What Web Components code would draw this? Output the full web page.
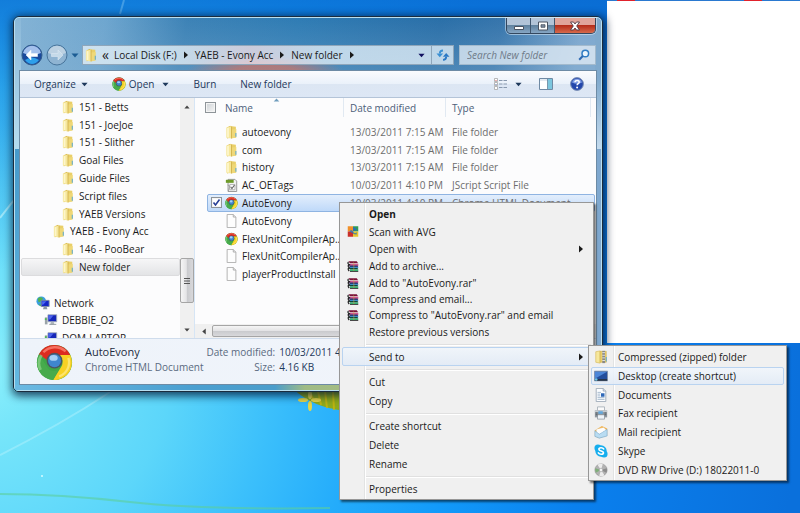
<!DOCTYPE html>
<html lang="en">
<head>
<meta charset="utf-8">
<title>New folder</title>
<style>
  html, body { margin: 0; height: 100%; }
  body { font: 10px/14px "Open Sans", "Noto Sans", sans-serif; color: #1a1a1a; }
</style>
</head>
<body>
<desk-top>
  <blank-panel></blank-panel>
  <explorer-window>
    <address-bar slot="address"></address-bar>
    <tool-bar slot="tools"></tool-bar>
    <nav-tree slot="nav"></nav-tree>
    <file-list slot="files"></file-list>
    <details-pane slot="details"></details-pane>
  </explorer-window>
  <context-menu class="main">
    <menu-item class="big" bold>Open</menu-item>
    <menu-item icon="avg">Scan with AVG</menu-item>
    <menu-item arrow>Open with</menu-item>
    <menu-item class="big" icon="rar">Add to archive...</menu-item>
    <menu-item class="small" icon="rar">Add to "AutoEvony.rar"</menu-item>
    <menu-item class="small" icon="rar">Compress and email...</menu-item>
    <menu-item class="small" icon="rar">Compress to "AutoEvony.rar" and email</menu-item>
    <menu-item class="big">Restore previous versions</menu-item>
    <menu-line></menu-line>
    <menu-item class="roomy" arrow active>Send to</menu-item>
    <menu-line></menu-line>
    <menu-item class="roomy">Cut</menu-item>
    <menu-item class="roomy">Copy</menu-item>
    <menu-line></menu-line>
    <menu-item class="roomy">Create shortcut</menu-item>
    <menu-item class="roomy">Delete</menu-item>
    <menu-item class="roomy">Rename</menu-item>
    <menu-line></menu-line>
    <menu-item class="roomy">Properties</menu-item>
  </context-menu>
  <context-menu class="sub">
    <menu-item icon="zip">Compressed (zipped) folder</menu-item>
    <menu-item icon="desktop" active>Desktop (create shortcut)</menu-item>
    <menu-item icon="document">Documents</menu-item>
    <menu-item icon="fax">Fax recipient</menu-item>
    <menu-item icon="mail">Mail recipient</menu-item>
    <menu-item icon="skype">Skype</menu-item>
    <menu-item icon="disc">DVD RW Drive (D:) 18022011-0</menu-item>
  </context-menu>
</desk-top>

<script>
const ICONS = {
  folder: ['0 0 14 16', `<path d="M2 2.500 6 .8v13.500l-4 1z" fill="#d9b94a"/><path d="M5.500 1.200 12 2v12.500l-6.500-.3z" fill="#e9cf68"/><path d="M1 2.800 7 1.800v13.700l-6-1z" fill="#f6e79c"/><path d="M2 3.500 4 3.200v11l-2-.3z" fill="#fdf6cb"/><path d="M7 5l5.500-.5v9.700L7 15.500z" fill="#efd878"/><path d="M7 1.800v13.700" stroke="#c9a63d" stroke-width=".8"/><path d="M12 9v4.500" stroke="#5fa9cf" stroke-width="1.200"/>`],
  chrome: ['0 0 40 40', `<circle cx="20" cy="20" r="19" fill="#3fa648"/><path d="M3.200 11A19 19 0 0 1 37 12H20a9 9 0 0 0-8.500 5z" fill="#dc2b1f"/><path d="M37 12A19 19 0 0 1 18.500 39l8.800-14.500A9 9 0 0 0 24.500 12z" fill="#f8d123"/><path d="M3.200 11 12 25a9 9 0 0 0 12 3l-5.500 11A19 19 0 0 1 3.200 11z" fill="#47ab4c"/><path d="M6 12A16 16 0 0 0 5 28" stroke="#9fdc98" stroke-width="3" fill="none" opacity=".6"/><path d="M8 9A17 17 0 0 1 32 8" stroke="#ff8f7c" stroke-width="2.500" fill="none" opacity=".7"/><path d="M35 15A16 16 0 0 1 25 35" stroke="#fff2a0" stroke-width="2.500" fill="none" opacity=".6"/><circle cx="20" cy="18" r="8.500" fill="#4b5563"/><circle cx="20" cy="18" r="7" fill="#3f86cf"/><ellipse cx="19" cy="15" rx="4.500" ry="3.200" fill="#a6d0f5"/>`],
  page: ['0 0 13 16', `<path d="M1.500.5h7l3 3v12h-10z" fill="#fdfdfd" stroke="#a9a9a9"/><path d="M8.500.5v3h3" fill="#e8e8e8" stroke="#a9a9a9"/>`],
  script: ['0 0 15 16', `<path d="M3.500 1.500h8l2 2v12h-10z" fill="#f2f2f2" stroke="#8d8d8d"/><path d="M1 2h9v3.500H1z" fill="#6d9a2a"/><path d="M5.500 7.500h6v6h-6z" fill="#fff" stroke="#aaa"/><path d="M6.500 10l1.500 2 3-4" fill="none" stroke="#666" stroke-width="1.300"/><path d="M3 8q3 0 2 3t-1 4" fill="none" stroke="#999"/>`],
  network: ['0 0 16 16', `<circle cx="6" cy="6" r="5.500" fill="#3a9fe0"/><path d="M2 3q3-3 6 0l-2 3-3 1zM3 9l3 1-1 2z" fill="#52b34a"/><path d="M6 5h9v7H6z" fill="#1427c8" stroke="#7a8aa0"/><path d="M7 6h5l-4 4H7z" fill="#4d68f0"/><path d="M9 12h3l1 3H8z" fill="#8995a5"/>`],
  computer: ['0 0 16 14', `<path d="M1 4h3v8H1z" fill="#9aa3a8"/><path d="M1 5h2v2H1z" fill="#4dbb50"/><path d="M4.500 1h10v8h-10z" fill="#1526b8" stroke="#a6b0ba"/><path d="M5 1.500h6l-4 5H5z" fill="#4c63ea"/><path d="M8 9h3l1 3H7z" fill="#aeb6bd"/><path d="M6 12h8" stroke="#8a9299"/>`],
  avg: ['0 0 16 16', `<path d="M1 1h7v7H1z" fill="#f0902a"/><path d="M8 1h7v7H8z" fill="#2f9c58"/><path d="M1 8h7v7H1z" fill="#c9302a"/><path d="M8 8h7v7H8z" fill="#e8c62c"/><path d="M8 2q4 1 6 5-4-2-6 1z" fill="#2a6fb5"/><path d="M3 8q3-4 5 0t5 1v3q-4 0-6-2z" fill="#2a72b8" opacity=".8"/>`],
  rar: ['0 0 16 16', `<path d="M2 1h11l2 3H4z" fill="#7a1238"/><path d="M4 4h11v2H4z" fill="#f1d7e2"/><path d="M3 5h12v2H3z" fill="#c32a70"/><path d="M2 6.500h12l1 2H4z" fill="#27356f"/><path d="M4 8.500h11v2H4z" fill="#3c8cc8"/><path d="M2 10h12l1 2H4z" fill="#0e4636"/><path d="M4 12h11v2H4z" fill="#35b070"/><path d="M4 14h11v1H4z" fill="#111"/><path d="M2 2q-2 2 1 3.500Q0 7 3 9.500 0 11 3 14" fill="none" stroke="#1a1a1a" stroke-width="1.500"/><path d="M8 1l2 3v10H8z" fill="#d2a93a" opacity=".35"/>`],
  zip: ['0 0 16 16', `<path d="M2 2l5-1v14l-5-1z" fill="#f6e79c" stroke="#d0ad42" stroke-width=".6"/><path d="M7 1.500h7V14H7z" fill="#ebcf68" stroke="#c9a63d" stroke-width=".6"/><path d="M9.500 1h3v14h-3z" fill="#888"/><path d="M9.500 3h3M9.500 6h3M9.500 9h3M9.500 12h3" stroke="#eee"/><path d="M14 8v5" stroke="#5fa9cf" stroke-width="1.200"/>`],
  desktop: ['0 0 16 16', `<path d="M.5 2.500h15v11H.5z" fill="#234e9c" stroke="#8794a8"/><path d="M1 3h14L1 11z" fill="#4b86d8"/><path d="M1 11.500h14v2H1z" fill="#293445"/><circle cx="2.500" cy="12" r="1.500" fill="#6bc5e8"/>`],
  document: ['0 0 16 16', `<path d="M2.500.5h8l3 3v12h-11z" fill="#fbfdff" stroke="#9aa7b5"/><path d="M10.500.5v3h3" fill="#dde5ee" stroke="#9aa7b5"/><path d="M4 5h4M4 7h3M4 9h3M4 11h8M4 13h8" stroke="#9fb2c8"/><path d="M8 6h4v4H8z" fill="#2f68b8"/>`],
  fax: ['0 0 16 16', `<path d="M4 1h8v5H4z" fill="#fafafa" stroke="#a8b0b8"/><path d="M1 5h14v8H1z" fill="#8f979e"/><path d="M1 5h14v2H1z" fill="#c6ccd1"/><path d="M5 6h5v3H5z" fill="#62a7dc"/><path d="M4 10h8v5H4z" fill="#eef3f8" stroke="#78828c" stroke-width=".7"/><path d="M2 8h2M2 10h2M12 8h2M12 10h2" stroke="#4f565c"/>`],
  mail: ['0 0 16 16', `<path d="M1 6 9 1l6 3v8l-9 3-5-2z" fill="#f3b451"/><path d="M3 5l8-2 3 3-3 5-8-1z" fill="#fff" stroke="#dfe5ea" stroke-width=".5"/><path d="M1 6.500l5 4L15 5v7.500L6 15l-5-2z" fill="#b9dcf2" stroke="#79a9cc" stroke-width=".7"/><path d="M3 6.500l3.500 2.800L13 5.400 11 3.500 4 5z" fill="#fdfdfd"/>`],
  skype: ['0 0 16 16', `<circle cx="8" cy="8" r="6.500" fill="#16aeee"/><circle cx="4.500" cy="4.500" r="4" fill="#16aeee"/><circle cx="11.500" cy="11.500" r="4" fill="#16aeee"/><path d="M11 5.600C10 3.800 5.600 3.800 5.600 6c0 2.500 5.200 1.500 5.200 4 0 2.200-4.600 2.200-5.800.2" fill="none" stroke="#fff" stroke-width="1.900" stroke-linecap="round"/>`],
  disc: ['0 0 16 16', `<circle cx="8" cy="8" r="7" fill="#b2b2b2" stroke="#8d8d8d" stroke-width=".7"/><path d="M8 8 4 2a7 7 0 0 1 6-.6zM8 8l4 6a7 7 0 0 1-6 .6z" fill="#ececec"/><path d="M8 8 1.500 6a7 7 0 0 0 .5 5z" fill="#7fae7a"/><path d="M8 8l6.600-2q.8 3-.6 5z" fill="#8b8b8b"/><circle cx="8" cy="8" r="2" fill="#f4f4f4" stroke="#999" stroke-width=".6"/>`],
  search: ['0 0 12 12', `<circle cx="7.300" cy="4.500" r="3.300" fill="#eaf5fd" stroke="#2e7cc4" stroke-width="1.500"/><path d="M4.800 7 1.200 10.800" stroke="#2c69b2" stroke-width="2"/>`],
  refresh: ['0 0 14 12', `<path d="M7 1.500Q3.800 1.500 3.800 4.500" fill="none" stroke="#3a8fd2" stroke-width="1.800"/><path d="M.5 4.500h6.600L3.800 8.300z" fill="#3a8fd2"/><path d="M7 10.800q3.200 0 3.200-3" fill="none" stroke="#2a78c4" stroke-width="1.800"/><path d="M6.900 7.800h6.600l-3.300-3.800z" fill="#2a78c4"/>`],
  view: ['0 0 14 12', `<path d="M.5.500h3v3h-3zM.5 4.500h3v3h-3zM.5 8.500h3v3h-3z" fill="#fff" stroke="#a7a7a7" stroke-width=".8"/><path d="M2 2v.9" stroke="#d55" /><path d="M2 6v.9" stroke="#46a" /><path d="M5 2.500h3.500M9.500 2.500H13M5 6h3.500M9.500 6H13M5 9.500h3.500M9.500 9.500H13" stroke="#8798ae"/>`],
  pane: ['0 0 14 12', `<path d="M.5.500h13v11H.5z" fill="#fff" stroke="#6f8aa4"/><path d="M1 2h12" stroke="#c9d6e4"/><path d="M8.500 1h4.500v10H8.500z" fill="#7cc6de"/><path d="M8.500 1v10" stroke="#5d7791" stroke-width=".7"/>`],
  help: ['0 0 14 14', `<circle cx="7" cy="7" r="6.400" fill="#2447ab" stroke="#7c90b5"/><path d="M2 5.500a5.200 5.200 0 0 1 10 0q-5 2.500-10 0z" fill="#7f9de4"/><path d="M5 5.300C5 2.800 9.300 2.900 9.200 5.200 9.100 6.600 7.200 6.700 7.100 8.200" fill="none" stroke="#fff" stroke-width="1.500"/><circle cx="7.100" cy="10.600" r="1" fill="#fff"/>`],
  down: ['0 0 8 5', `<path d="M.5.500h7L4 4.500z" fill="currentColor"/>`],
  right: ['0 0 4 8', `<path d="M0 .5 4 4 0 7.500z" fill="currentColor"/>`],
  left: ['0 0 4 8', `<path d="M4 .5 0 4l4 3.500z" fill="currentColor"/>`],
  up: ['0 0 8 5', `<path d="M.5 4.500h7L4 .5z" fill="currentColor"/>`],
  back: ['0 0 22 22', `<circle cx="11" cy="11" r="10" fill="#1a4a9c" stroke="#335d8c"/><path d="M2 9a9.200 9.200 0 0 1 18 0q-9 4-18 0z" fill="#a3c0ec"/><path d="M4 16q7-5 14 0-3 4-7 4t-7-4z" fill="#2fa0ea"/><path d="M10 6 5 11l5 5v-3.500h6.500v-3H10z" fill="#fff" stroke="#e8f1fb" stroke-width=".6"/>`],
  forward: ['0 0 22 22', `<circle cx="11" cy="11" r="10" fill="#8fb4d2" stroke="#48759b"/><path d="M2 9a9.200 9.200 0 0 1 18 0q-9 4-18 0z" fill="#bcd1e2"/><path d="M12 6l5 5-5 5v-3.500H5.500v-3H12z" fill="#c5dae9" stroke="#dbe8f1" stroke-width=".6"/>`],
  minimize: ['0 0 12 12', `<path d="M1.500 6.500h9v3h-9z" fill="#fff" stroke="#4a5361"/>`],
  maximize: ['0 0 12 12', `<path d="M1.500 2h9v8h-9z" fill="#fff" stroke="#4a5361"/><path d="M4 4.700h4v2.600H4z" fill="#7d8ca0" stroke="#4a5361" stroke-width=".8"/>`],
  close: ['0 0 12 12', `<path d="M1.500 2h3L6 4l1.500-2h3L7.700 6l2.800 4h-3L6 8l-1.500 2h-3l2.800-4z" fill="#fff" stroke="#513b45" stroke-width=".9"/>`],
  grip: ['0 0 8 8', `<path d="M1 1.500h6M1 4h6M1 6.500h6" stroke="#555"/>`]
};

const define = (name, css, html) => customElements.define(name, class extends HTMLElement {
  constructor() {
    super();
    const root = this.attachShadow({ mode: 'open' });
    root.innerHTML = `<style>*{box-sizing:border-box}:host{box-sizing:border-box}button{font:inherit;color:inherit;margin:0;padding:0;border:0;background:none}${css}</style>${typeof html === 'function' ? html(this) : html}`;
  }
});

define('ui-icon',
  `:host{display:block;flex:none;width:16px;height:16px}svg{display:block;width:100%;height:100%}`,
  el => { const [box, art] = ICONS[el.getAttribute('name')]; return `<svg viewBox="${box}" aria-hidden="true">${art}</svg>`; });

define('desk-top', `
  :host{display:block;position:relative;min-height:100vh;overflow:hidden;
    background:radial-gradient(circle at -20px 370px,#8cf0fc 0,#78e6fa 60px,#5cd6fa 190px,#3cc0fb 290px,#24acfb 380px,#129afa 480px,#0a80ee 610px,#0a70dc 820px)}
  .dusk{position:absolute;inset:0;background:linear-gradient(to bottom,rgba(10,105,205,.7),rgba(10,115,210,.4) 90px,transparent 270px)}
  svg{position:absolute;inset:0;width:100%;height:100%}
  ::slotted(blank-panel){position:absolute;left:607px;right:0;top:0;height:343px}
  ::slotted(explorer-window){position:absolute;left:13px;right:197px;top:16px}
  ::slotted(context-menu){position:absolute;z-index:2}
  ::slotted(context-menu.main){left:339px;top:202px;min-width:255px}
  ::slotted(context-menu.sub){left:588px;top:345px;min-width:199px}`,
  `<div class="dusk"></div>
  <svg viewBox="0 0 800 513" preserveAspectRatio="xMinYMin slice" aria-hidden="true">
    <path d="M0 455Q60 425 110 392" stroke="#b5f2fc" stroke-width="2" fill="none" opacity=".45"/>
    <path d="M0 218 14 200" stroke="#c9f6fc" stroke-width="2" opacity=".6"/>
    <path d="M0 494q60 0 130 8t200 6" stroke="#5ccf9b" stroke-width="2" fill="none" opacity=".6"/>
    <path d="M120 14 124 0" stroke="#8ccdf5" stroke-width="2" opacity=".4"/>
    <circle cx="42" cy="476" r="1" fill="#d9fbff"/>
    <ellipse cx="352" cy="350" rx="76" ry="61" fill="#8fa91b"/>
    <path d="M310 392l4 9M318 391l3 14M325 391l2 17M333 391l1 19" stroke="#c8b60e" stroke-width="2" opacity=".8"/>
    <g fill="#e6d648"><ellipse cx="303" cy="400" rx="5" ry="2"/><ellipse cx="316" cy="400" rx="5" ry="2"/><ellipse cx="310" cy="406" rx="2" ry="5"/><ellipse cx="310" cy="395" rx="2" ry="4"/></g>
  </svg><slot></slot>`);

define('blank-panel', `
  :host{display:block;background:#fff;border-top:1px solid #2a79d0}
  i{position:absolute;top:-1px;width:18px;height:1px;background:#e0222c}
  .a{left:10px}.b{left:137px}`, `<i class="a"></i><i class="b"></i>`);

define('explorer-window', `
  :host{display:block;border:1px solid #1b2c3d;border-radius:6px 6px 5px 5px;box-shadow:1px 2px 9px 2px rgba(0,20,50,.75)}
  .glass{border:1px solid #b9dff0;border-radius:5px;padding:0 5px 5px;position:relative;
    background:
     linear-gradient(#8bb8d8,#b5dcef 131px,transparent 131px) left/6px 100% no-repeat,
     linear-gradient(#7fa9cd 60px,#c4dbee 131px,transparent 131px) right/6px 100% no-repeat,
     linear-gradient(transparent,rgba(140,180,210,.35)) 0 0/100% 54px no-repeat,
     radial-gradient(ellipse 80px 16px at 250px 54px,rgba(195,95,80,.95) 40%,transparent) no-repeat,
     linear-gradient(100deg,#84b3d5 0,#6ea6cf 90px,#3c82b6 170px,#2f7cb4 280px,#2a6fa8 420px,#3675ac 480px,#7fa8cf 560px)}
  .glass::after{content:"";position:absolute;left:0;right:0;bottom:0;height:5px;background:linear-gradient(90deg,#6bb9e2,#4a9fd0 180px,#4b9dcb 260px,#9fbb85 290px,#a8bd80 370px,#3c80b8 420px,#2b70ac)}
  .glass::before{content:"";position:absolute;left:0;top:131px;bottom:0;width:5px;background:linear-gradient(#469acb,#64b9e2)}
  .bar{display:flex;justify-content:flex-end;height:27px}
  .caption{display:flex;height:16px;border:1px solid #33475e;border-top:0;border-radius:0 0 5px 5px;overflow:hidden;box-shadow:0 0 0 1px rgba(220,235,248,.55)}
  .caption button{display:grid;place-items:center;width:24px;border-right:1px solid #40566e;background:linear-gradient(#b2c4d8 45%,#60829f 50%,#86a6c4)}
  .caption button:last-child{width:40px;border-right:0;background:linear-gradient(#e0a49a 45%,#b52d1a 50%,#d66a4c)}
  .caption ui-icon{width:12px;height:12px}
  .client{position:relative;z-index:1;border:1px solid #6d8ba5;margin:5px -1px 0;background:#fcfcfd;display:flex;flex-direction:column}
  .panes{display:grid;grid-template-columns:175px minmax(0,1fr);height:240px}`,
  `<div class="glass">
    <div class="bar"><div class="caption">
      <button aria-label="Minimize"><ui-icon name="minimize"></ui-icon></button>
      <button aria-label="Maximize"><ui-icon name="maximize"></ui-icon></button>
      <button aria-label="Close"><ui-icon name="close"></ui-icon></button></div></div>
    <slot name="address"></slot>
    <div class="client"><slot name="tools"></slot>
      <div class="panes"><slot name="nav"></slot><slot name="files"></slot></div>
      <slot name="details"></slot></div>
  </div>`);

define('address-bar', `
  :host{display:flex;align-items:center;height:20px;gap:5px}
  .hist{display:flex;align-items:center;gap:3px;width:56px;margin-left:1px}
  .hist ui-icon{width:22px;height:22px}
  .hist .drop{width:8px;height:5px;color:#1c5d94}
  .path{flex:1;display:flex;align-items:center;height:20px;border:1px solid #8fa6ba;background:linear-gradient(90deg,rgba(228,240,247,.78) 25%,rgba(240,222,228,.78) 45%,rgba(222,236,246,.8) 65%)}
  .path nav{display:flex;align-items:center;flex:1;gap:7px;padding-left:2px}
  .path nav>ui-icon[name=folder]{width:12px;height:14px}
  .path a{color:#1a1a1a;text-decoration:none;white-space:nowrap}
  .path ui-icon[name=right]{width:4px;height:8px}
  .more{font-size:14px;line-height:14px;margin:0 -2px}
  .path>button{display:grid;place-items:center;width:19px;height:18px}
  .path>button ui-icon{width:7px;height:5px;color:#101060}
  .path>button.re{border-left:1px solid #8fa6ba;width:22px}
  .path>button.re ui-icon{width:14px;height:12px}
  .find{display:flex;align-items:center;width:137px;height:20px;border:1px solid #a3bacd;background:rgba(222,234,244,.8);padding:0 5px 0 7px}
  input{flex:1;min-width:0;font:italic 10px/14px "Open Sans","Noto Sans",sans-serif;border:0;background:none;padding:0;outline:0}
  input::placeholder{color:#6f7b88;opacity:1}
  .find ui-icon{width:12px;height:12px}`,
  `<div class="hist"><button aria-label="Back"><ui-icon name="back"></ui-icon></button><button aria-label="Forward"><ui-icon name="forward"></ui-icon></button><button aria-label="Recent"><ui-icon class="drop" name="down"></ui-icon></button></div>
  <div class="path"><nav aria-label="Address"><ui-icon name="folder"></ui-icon><span class="more">«</span><a href="#f">Local Disk (F:)</a><ui-icon name="right"></ui-icon><a href="#acc">YAEB - Evony Acc</a><ui-icon name="right"></ui-icon><a href="#new">New folder</a><ui-icon name="right"></ui-icon></nav>
    <button aria-label="Previous locations"><ui-icon name="down"></ui-icon></button><button class="re" aria-label="Refresh"><ui-icon name="refresh"></ui-icon></button></div>
  <div class="find"><input type="search" aria-label="Search New folder" placeholder="Search New folder"><ui-icon name="search"></ui-icon></div>`);

define('tool-bar', `
  :host{display:flex;align-items:center;gap:24px;height:27px;padding:0 12px 0 14px;color:#1e395b;border-bottom:1px solid #b4c4d8;background:linear-gradient(#fafcfe,#eaf1fa 50%,#dce6f3 50%,#dde7f5)}
  button{display:flex;align-items:center;gap:5px}
  .open span{margin:0 3px 0 -2px}
  .push{flex:1}
  ui-icon[name=down]{width:7px;height:5px}
  ui-icon[name=chrome]{width:14px;height:14px}
  ui-icon[name=view],ui-icon[name=pane]{width:14px;height:12px}
  ui-icon[name=help]{width:14px;height:14px}
  .right{display:flex;align-items:center;gap:17px}
  .right button{gap:7px}`,
  `<button>Organize <ui-icon name="down"></ui-icon></button>
  <button class="open"><ui-icon name="chrome"></ui-icon><span>Open</span><ui-icon name="down"></ui-icon></button>
  <button>Burn</button><button>New folder</button><span class="push"></span>
  <div class="right"><button aria-label="Change your view"><ui-icon name="view"></ui-icon><ui-icon name="down"></ui-icon></button><button aria-label="Show the preview pane"><ui-icon name="pane"></ui-icon></button><button aria-label="Help"><ui-icon name="help"></ui-icon></button></div>`);

define('scroll-bar', `
  :host{display:flex;flex-direction:column;width:14px;background:#f0f0f0}
  button{display:grid;place-items:center;height:17px}
  ui-icon{width:6px;height:4px;color:#444}
  .track{flex:1;display:flex;flex-direction:column;justify-content:flex-end}
  .thumb{height:45px;margin-bottom:18px;border:1px solid #a5a5a5;border-radius:2px;background:linear-gradient(90deg,#f5f5f5,#e4e4e6 45%,#c9cacd 50%,#d8d8db);display:grid;place-items:center}
  .thumb ui-icon{width:8px;height:8px}
  :host([across]){flex-direction:row;width:auto;height:14px}
  :host([across]) button{width:17px;height:14px}
  :host([across]) ui-icon{width:4px;height:7px}
  :host([across]) .track{display:block}
  :host([across]) .thumb{height:12px;margin:1px 70px 1px 0;background:linear-gradient(#f5f5f5,#e4e4e6 45%,#c9cacd 50%,#d8d8db)}
  :host([across]) .thumb ui-icon{display:none}`,
  el => { const a = el.hasAttribute('across');
    return `<button aria-label="Back"><ui-icon name="${a ? 'left' : 'up'}"></ui-icon></button><div class="track"><div class="thumb"><ui-icon name="grip"></ui-icon></div></div><button aria-label="Forward"><ui-icon name="${a ? 'right' : 'down'}"></ui-icon></button>`; });

const TREE = [['folder', '151 - Betts', 3], ['folder', '151 - JoeJoe', 3], ['folder', '151 - Slither', 3], ['folder', 'Goal Files', 3], ['folder', 'Guide Files', 3], ['folder', 'Script files', 3], ['folder', 'YAEB Versions', 3], ['folder', 'YAEB - Evony Acc', 2], ['folder', '146 - PooBear', 3], ['folder', 'New folder', 3, 'on'], null, ['network', 'Network', 0], ['computer', 'DEBBIE_O2', 1], ['computer', 'DOM-LAPTOP', 1]];
define('nav-tree', `
  :host{display:grid;grid-template-columns:minmax(0,1fr) 14px;overflow:hidden;border-right:1px solid #d6e5f5}
  ul{list-style:none;margin:0;padding:0;height:249px;display:grid;grid-auto-rows:1fr}
  li{display:flex;align-items:center;gap:5px;white-space:nowrap}
  li.on{background:linear-gradient(#f6f6f7,#e3e4e6);border:1px solid #dcdcde;border-radius:2px;margin-left:1px}
  .d0{padding-left:16px}.d1{padding-left:24px}.d2{padding-left:33px}.d3{padding-left:42px}.on.d3{padding-left:40px}
  ui-icon{width:12px;height:14px}
  ui-icon[name=network],ui-icon[name=computer]{width:14px;height:14px}
  .d0,.d1{gap:4px}
  scroll-bar{height:240px}`,
  `<ul>${TREE.map(r => r ? `<li class="d${r[2]} ${r[3] || ''}"><ui-icon name="${r[0]}"></ui-icon><span>${r[1]}</span></li>` : '<li></li>').join('')}</ul><scroll-bar></scroll-bar>`);

const FILES = [['folder', 'autoevony', '13/03/2011 7:15 AM', 'File folder'], ['folder', 'com', '13/03/2011 7:15 AM', 'File folder'], ['folder', 'history', '13/03/2011 7:15 AM', 'File folder'], ['script', 'AC_OETags', '10/03/2011 4:10 PM', 'JScript Script File'], ['chrome', 'AutoEvony', '10/03/2011 4:10 PM', 'Chrome HTML Document', 'on'], ['page', 'AutoEvony', '', ''], ['chrome', 'FlexUnitCompilerAp...', '', ''], ['page', 'FlexUnitCompilerAp...', '', ''], ['page', 'playerProductInstall', '', '']];
define('file-list', `
  :host{display:flex;flex-direction:column;justify-content:space-between;overflow:hidden;position:relative}
  table{display:block}
  thead,tbody{display:grid}
  tbody{height:160px;grid-auto-rows:1fr;margin:6px 1px 0 12px}
  tr{display:grid;grid-template-columns:17px 119px 102px minmax(0,1fr);align-items:center}
  thead tr{height:19px;margin:0 1px 0 13px;padding-right:4px}
  th{font-weight:400;text-align:left;color:#4c607a;padding:0;height:19px;display:flex;align-items:center;position:relative}
  th.n,th.d,th.t{border-right:1px solid #e1e9f2}
  th.d,th.t{padding-left:6px}
  .sort{position:absolute;left:48px;top:0;width:7px;height:4px;color:#6f9dbd}
  td{padding:0;white-space:nowrap;color:#6d6d6d}
  td.name{display:flex;align-items:center;gap:4px;color:#1a1a1a}
  td.name ui-icon{width:13px;height:14px}
  td.date,td.type{padding-left:6px}
  tbody tr{border:1px solid transparent;border-radius:2px}
  tr.on{background:linear-gradient(#e3eefc,#bfd9f9);border-color:#8fb4e2}
  input{appearance:none;display:block;width:11px;height:11px;margin:0;border:1px solid #8e9499;background:linear-gradient(135deg,#cdd1d5,#f6f6f6);box-shadow:inset 0 0 0 1px #f4f4f4}
  td input{margin-left:3px}
  td input:checked{background:#fff url('data:image/svg+xml,<svg xmlns="http://www.w3.org/2000/svg" viewBox="0 0 9 9"><path d="M1.500 4.500 3.500 7 7.500 1.500" fill="none" stroke="%23283f96" stroke-width="1.600"/></svg>')}
  thead input{margin-left:-3px}`,
  `<table><thead><tr><th><input type="checkbox" aria-label="Select all"></th><th class="n">Name<ui-icon class="sort" name="up"></ui-icon></th><th class="d">Date modified</th><th class="t">Type</th></tr></thead>
  <tbody>${FILES.map(r => `<tr class="${r[4] || ''}"><td>${r[4] ? `<input type="checkbox" checked aria-label="Select ${r[1]}">` : ''}</td><td class="name"><ui-icon name="${r[0]}"></ui-icon><span>${r[1]}</span></td><td class="date">${r[2]}</td><td class="type">${r[3]}</td></tr>`).join('')}</tbody></table>
  <scroll-bar across></scroll-bar>`);

define('details-pane', `
  :host{display:flex;align-items:flex-start;gap:12px;height:46px;padding:5px 0 0 16px;border-top:1px solid #cfdcec;background:linear-gradient(90deg,#eef3fa,#f1f5fb);color:#5a6a80;overflow:hidden}
  ui-icon{width:37px;height:37px}
  .col{display:grid;grid-auto-rows:15px;align-items:center;white-space:nowrap}
  .name{font-size:11px;color:#1e2c40}
  dl{display:grid;grid-template-columns:auto auto;grid-auto-rows:15px;column-gap:4px;margin:0 0 0 -9px;white-space:nowrap;align-items:center}
  dt{text-align:right}dd{margin:0;color:#1e395b}`,
  `<ui-icon name="chrome"></ui-icon><div class="col"><span class="name">AutoEvony</span><span>Chrome HTML Document</span></div>
  <dl><dt>Date modified:</dt><dd>10/03/2011 4:10 PM</dd><dt>Size:</dt><dd>4.16 KB</dd></dl>`);

define('context-menu', `
  :host{display:grid;border:1px solid #979797;padding:2px 2px 1px;box-shadow:2px 2px 2px rgba(0,0,0,.55);
    background:linear-gradient(90deg,transparent 24px,#e2e3e3 24px,#e2e3e3 25px,#fff 25px,#fff 26px,transparent 26px),#f0f0f0}
  :host(.sub){height:136px;grid-auto-rows:1fr}`, `<slot></slot>`);
document.querySelectorAll('context-menu').forEach(m => m.setAttribute('role', 'menu'));

define('menu-item', `
  :host{display:grid;height:17px}
  :host(.big){height:18px}:host(.small){height:16px}:host(.roomy){height:19px}
  :host-context(.sub){height:auto}
  button{display:flex;align-items:center;border:1px solid transparent;border-radius:2px;padding:0 7px 0 4px;text-align:left;white-space:nowrap}
  :host([active]) button{border-color:#b9d3f0;background:linear-gradient(rgba(240,245,251,.9),rgba(226,235,246,.9))}
  .mark{width:22px;flex:none}
  :host([bold]) .text{font-weight:700}
  ui-icon{width:12px;height:13px}
  :host-context(.sub) .mark ui-icon{width:14px;height:14px;margin-left:-2px}
  .text{flex:1}
  .arrow{width:4px;height:8px;margin-left:auto}`,
  el => `<button role="menuitem"><span class="mark">${el.hasAttribute('icon') ? `<ui-icon name="${el.getAttribute('icon')}"></ui-icon>` : ''}</span><span class="text"><slot></slot></span>${el.hasAttribute('arrow') ? '<ui-icon class="arrow" name="right"></ui-icon>' : ''}</button>`);

define('menu-line', `:host{display:block;height:6px;padding-top:3px}
  hr{margin:0 0 0 24px;border:0;height:2px;background:linear-gradient(#e0e0e0 50%,#fff 50%)}`, `<hr>`);
</script>
</body>
</html>
